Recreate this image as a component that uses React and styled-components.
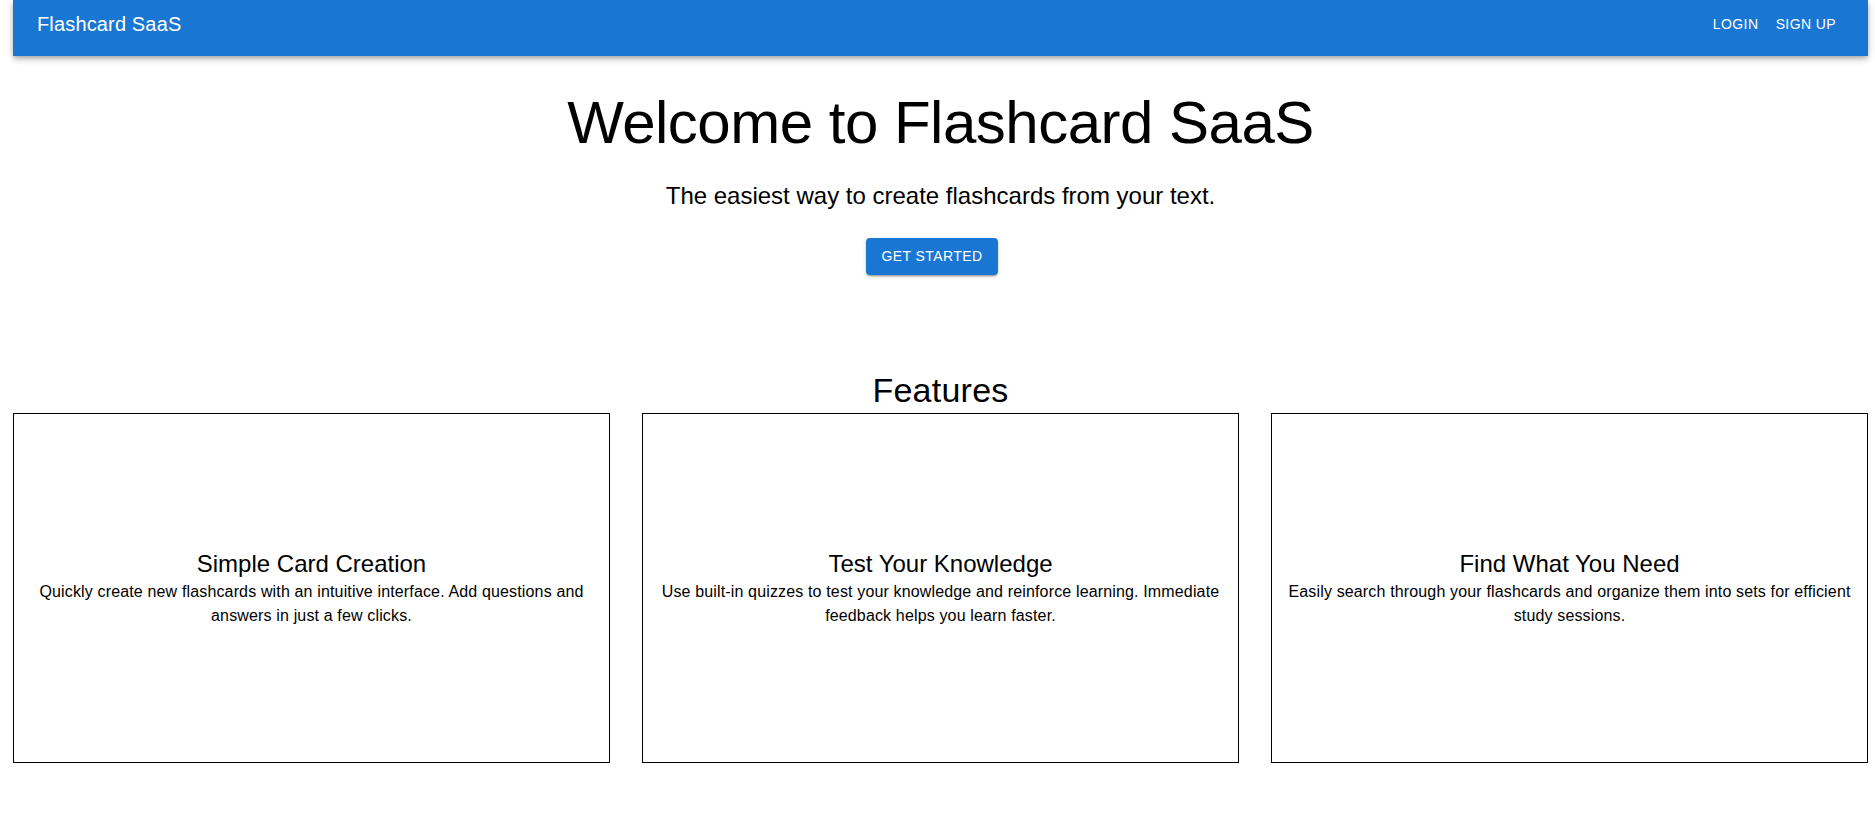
import React from 'react';
import styled, { createGlobalStyle } from 'styled-components';

const features = [
  {
    title: 'Simple Card Creation',
    text: 'Quickly create new flashcards with an intuitive interface. Add questions and answers in just a few clicks.',
  },
  {
    title: 'Test Your Knowledge',
    text: 'Use built-in quizzes to test your knowledge and reinforce learning. Immediate feedback helps you learn faster.',
  },
  {
    title: 'Find What You Need',
    text: 'Easily search through your flashcards and organize them into sets for efficient study sessions.',
  },
];

const App = () => {
  return (
    <>
      <GlobalStyle />
      <Page>
        <AppBar>
          <Toolbar>
            <Brand>Flashcard SaaS</Brand>
            <NavButton>Login</NavButton>
            <NavButton>Sign Up</NavButton>
          </Toolbar>
        </AppBar>

        <Hero>
          <HeroTitle>Welcome to Flashcard SaaS</HeroTitle>
          <HeroSubtitle>The easiest way to create flashcards from your text.</HeroSubtitle>
          <PrimaryButton>Get Started</PrimaryButton>
        </Hero>

        <Features>
          <SectionTitle>Features</SectionTitle>
          <CardGrid>
            {features.map((f) => (
              <FeatureCard key={f.title}>
                <CardTitle>{f.title}</CardTitle>
                <CardText>{f.text}</CardText>
              </FeatureCard>
            ))}
          </CardGrid>
        </Features>
      </Page>
    </>
  );
};

export default App;

//styles

const GlobalStyle = createGlobalStyle`
html, body {
  margin: 0;
  padding: 0;
  background: #fff;
}
body {
  font-family: "Liberation Sans", Arial, Helvetica, sans-serif;
  color: #000;
}
*, *::before, *::after {
  box-sizing: border-box;
}
`;

const Page = styled.div`
margin: 0 7px 0 13px;
padding-bottom: 53px;
`;

const AppBar = styled.header`
background: #1976d2;
color: #fff;
height: 56px;
box-shadow: 0px 2px 4px -1px rgba(0,0,0,0.2), 0px 4px 5px 0px rgba(0,0,0,0.14), 0px 1px 10px 0px rgba(0,0,0,0.12);
`;

const Toolbar = styled.div`
display: flex;
align-items: center;
height: 48px;
padding: 0 24px;
`;

const Brand = styled.div`
flex-grow: 1;
font-size: 20px;
line-height: 32px;
letter-spacing: 0.15px;
`;

const NavButton = styled.button`
background: transparent;
border: none;
color: inherit;
font-family: inherit;
font-size: 14px;
font-weight: 500;
line-height: 24.5px;
letter-spacing: 0.4px;
text-transform: uppercase;
padding: 6px 8px;
min-width: 64px;
border-radius: 4px;
cursor: pointer;

&:hover{
  background: rgba(255,255,255,0.08);
}`;

const Hero = styled.section`
display: flex;
flex-direction: column;
align-items: center;
text-align: center;
padding-top: 31px;
`;

const HeroTitle = styled.h2`
margin: 0 0 21px;
font-size: 60px;
font-weight: 400;
line-height: 72px;
letter-spacing: -0.5px;
`;

const HeroSubtitle = styled.h5`
margin: 0 0 8px;
font-size: 24px;
font-weight: 400;
line-height: 32px;
`;

const PrimaryButton = styled.button`
margin: 18px 17px 0 0;
background: #1976d2;
color: #fff;
border: none;
border-radius: 4px;
font-family: inherit;
font-size: 14px;
font-weight: 500;
line-height: 24.5px;
letter-spacing: 0.4px;
text-transform: uppercase;
padding: 6px 16px;
min-width: 64px;
cursor: pointer;
box-shadow: 0px 3px 1px -2px rgba(0,0,0,0.2), 0px 2px 2px 0px rgba(0,0,0,0.14), 0px 1px 5px 0px rgba(0,0,0,0.12);

&:hover{
  background: #1565c0;
}`;

const Features = styled.section`
margin-top: 94px;
text-align: center;
`;

const SectionTitle = styled.h4`
margin: 0 0 2px;
font-size: 34px;
font-weight: 400;
line-height: 42px;
letter-spacing: 0.25px;
`;

const CardGrid = styled.div`
display: grid;
grid-template-columns: repeat(3, 1fr);
gap: 32px;
`;

const FeatureCard = styled.div`
display: flex;
flex-direction: column;
justify-content: center;
align-items: center;
height: 350px;
padding: 16px;
border: 1px solid #000;
`;

const CardTitle = styled.h5`
margin: 0;
font-size: 24px;
font-weight: 400;
line-height: 32px;
`;

const CardText = styled.p`
margin: 0;
font-size: 16px;
line-height: 24px;
letter-spacing: 0.15px;
`;
